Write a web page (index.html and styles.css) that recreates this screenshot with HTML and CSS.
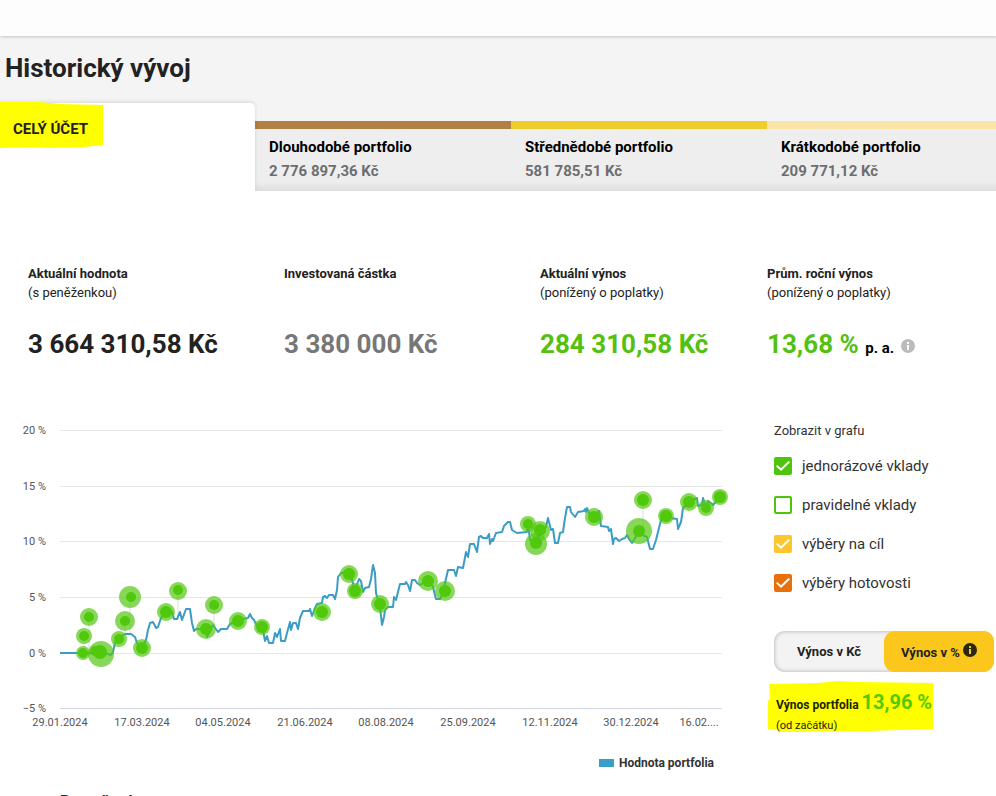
FILE: index.html
```html
<!DOCTYPE html>
<html lang="cs">
<head>
<meta charset="utf-8">
<meta name="viewport" content="width=device-width, initial-scale=1">
<title>Historický vývoj</title>
<link rel="stylesheet" href="styles.css">
</head>
<body>
<div class="topbar"></div>
<header class="head">
  <h1>Historický vývoj</h1>
  <nav class="tabs">
    <button class="tab tab-active" type="button">
      <svg class="mark mark-tab" viewBox="0 0 104 48" preserveAspectRatio="none" aria-hidden="true"><path d="M0 1L40 1 60 3 103 4V44L84 46 50 47 28 46 0 47Z"/></svg>
      <span>CELÝ ÚČET</span>
    </button>
    <button class="tab tab-long" type="button"><span class="tab-name">Dlouhodobé portfolio</span><span class="tab-sum">2 776 897,36 Kč</span></button>
    <button class="tab tab-mid" type="button"><span class="tab-name">Střednědobé portfolio</span><span class="tab-sum">581 785,51 Kč</span></button>
    <button class="tab tab-short" type="button"><span class="tab-name">Krátkodobé portfolio</span><span class="tab-sum">209 771,12 Kč</span></button>
  </nav>
</header>
<main>
  <section class="stats">
    <div class="stat"><h2>Aktuální hodnota</h2><p>(s peněženkou)</p><strong>3 664 310,58 Kč</strong></div>
    <div class="stat"><h2>Investovaná částka</h2><p></p><strong class="muted">3 380 000 Kč</strong></div>
    <div class="stat"><h2>Aktuální výnos</h2><p>(ponížený o poplatky)</p><strong class="green">284 310,58 Kč</strong></div>
    <div class="stat"><h2>Prům. roční výnos</h2><p>(ponížený o poplatky)</p><strong class="green">13,68 % <small>p. a.</small> <svg class="info" viewBox="0 0 14 14" aria-hidden="true"><circle cx="7" cy="7" r="7"/><path d="M6 3h2v2H6zM6 6h2v5H6z"/></svg></strong></div>
  </section>
  <section class="detail">
    <div class="chart">
      <svg class="plot" viewBox="0 415 740 320" role="img" aria-label="Hodnota portfolia">
        <path class="grid" d="M60 430.500H722M60 486.500H722M60 541.500H722M60 597.500H722M60 653.500H722"/>
        <path class="axis" d="M60 708.500H722"/>
        <g class="ylab">
          <text x="46" y="434">20 %</text><text x="46" y="490">15 %</text><text x="46" y="545">10 %</text><text x="46" y="601">5 %</text><text x="46" y="657">0 %</text><text x="46" y="712">−5 %</text>
        </g>
        <g class="xlab">
          <text x="60" y="726">29.01.2024</text><text x="142" y="726">17.03.2024</text><text x="223" y="726">04.05.2024</text><text x="305" y="726">21.06.2024</text><text x="386" y="726">08.08.2024</text><text x="468" y="726">25.09.2024</text><text x="550" y="726">12.11.2024</text><text x="631" y="726">30.12.2024</text><text x="699" y="726">16.02....</text>
        </g>
        <path class="stem" d="M84 636V653M89 618V653M130 597V634M125 621V634M178 591V619M214 605V625M643 500V531"/>
        <polyline class="line" points="60,653 100,653 108,654 111,655 113,652 115,643 120,637 125,634 131,634 135,637 137,643 142,648 146,640 148,630 150,623 153,622 156,628 158,627 161,618 166,612 172,612 174,619 177,619 180,612 182,620 186,609 190,609 192,623 194,631 196,629 205,629 207,637 213,625 218,632 221,629 227,629 230,624 238,620 248,618 250,614 252,618 254,620 257,626 263,630 265,641 267,636 269,643 273,643 275,633 277,637 280,629 281,641 285,641 287,633 290,622 291,630 293,623 296,623 298,629 300,618 303,611 309,611 310,609 312,616 315,608 317,604 322,603 323,597 325,596 327,598 329,595 333,595 335,599 337,590 338,577 341,573 348,572 352,580 355,590 359,579 361,581 363,592 365,588 369,587 371,579 373,565 375,573 376,593 380,607 382,625 384,617 385,610 388,607 393,607 394,597 396,600 400,584 405,584 406,582 408,585 410,591 412,580 415,580 417,583 420,585 428,580 433,587 436,599 440,599 443,593 445,583 448,570 454,570 456,576 458,567 463,568 466,552 468,557 470,544 474,544 477,552 479,537 481,536 483,538 487,538 489,534 490,544 492,539 493,541 496,533 502,532 504,526 508,522 510,522 512,530 517,533 527,532 528,524 530,540 537,542 540,530 546,527 548,518 551,530 553,529 555,543 558,543 560,533 563,532 565,518 567,507 570,507 571,512 575,517 578,512 584,511 585,509 586,512 587,508 590,515 594,517 599,511 601,526 608,527 609,531 611,529 613,544 614,539 616,538 619,541 622,539 625,538 627,535 629,539 632,543 638,533 647,537 650,549 653,549 656,540 658,532 661,520 666,515 670,518 677,519 678,529 681,522 683,508 688,502 697,498 698,506 702,505 703,498 706,508 708,501 713,505 720,497"/>
        <g class="halo">
          <circle cx="84" cy="636" r="8"/><circle cx="89" cy="617" r="9"/><circle cx="83" cy="653" r="7"/><circle cx="101" cy="654" r="13"/><circle cx="130" cy="597" r="11"/><circle cx="125" cy="621" r="10"/><circle cx="119" cy="639" r="8"/><circle cx="142" cy="648" r="9"/><circle cx="166" cy="612" r="9"/><circle cx="178" cy="591" r="9"/><circle cx="206" cy="629" r="10"/><circle cx="214" cy="605" r="9"/><circle cx="238" cy="621" r="9"/><circle cx="262" cy="627" r="8"/><circle cx="322" cy="612" r="9"/><circle cx="349" cy="574" r="9"/><circle cx="355" cy="591" r="8"/><circle cx="380" cy="604" r="9"/><circle cx="428" cy="581" r="10"/><circle cx="445" cy="591" r="10"/><circle cx="528" cy="524" r="8"/><circle cx="540" cy="531" r="10"/><circle cx="536" cy="544" r="11"/><circle cx="594" cy="517" r="9"/><circle cx="643" cy="500" r="9"/><circle cx="639" cy="531" r="13"/><circle cx="666" cy="516" r="8"/><circle cx="689" cy="502" r="9"/><circle cx="706" cy="508" r="8"/><circle cx="720" cy="497" r="8"/>
        </g>
        <g class="core">
          <circle cx="84" cy="636" r="5"/><circle cx="89" cy="617" r="5"/><circle cx="83" cy="653" r="5"/><circle cx="100" cy="652" r="7"/><circle cx="95" cy="651" r="5"/><circle cx="131" cy="597" r="5"/><circle cx="125" cy="621" r="5"/><circle cx="119" cy="639" r="5"/><circle cx="142" cy="648" r="6"/><circle cx="166" cy="612" r="6"/><circle cx="178" cy="590" r="5"/><circle cx="206" cy="629" r="6"/><circle cx="214" cy="605" r="5"/><circle cx="238" cy="621" r="6"/><circle cx="262" cy="627" r="6"/><circle cx="322" cy="612" r="6"/><circle cx="349" cy="574" r="6"/><circle cx="355" cy="591" r="6"/><circle cx="380" cy="604" r="6"/><circle cx="428" cy="581" r="6"/><circle cx="445" cy="591" r="6"/><circle cx="528" cy="524" r="5"/><circle cx="540" cy="530" r="6"/><circle cx="536" cy="543" r="6"/><circle cx="594" cy="517" r="6"/><circle cx="643" cy="500" r="6"/><circle cx="639" cy="531" r="6"/><circle cx="666" cy="516" r="6"/><circle cx="689" cy="502" r="6"/><circle cx="706" cy="508" r="5"/><circle cx="720" cy="497" r="6"/>
        </g>
      </svg>
      <div class="legend"><i></i>Hodnota portfolia</div>
    </div>
    <aside class="side">
      <fieldset>
        <legend>Zobrazit v grafu</legend>
        <label class="check"><input class="c-green" type="checkbox" checked>jednorázové vklady</label>
        <label class="check"><input class="c-green" type="checkbox">pravidelné vklady</label>
        <label class="check"><input class="c-yellow" type="checkbox" checked>výběry na cíl</label>
        <label class="check"><input class="c-orange" type="checkbox" checked>výběry hotovosti</label>
      </fieldset>
      <div class="switch">
        <button type="button">Výnos v Kč</button>
        <button class="on" type="button">Výnos v % <svg class="info info-dark" viewBox="0 0 14 14" aria-hidden="true"><circle cx="7" cy="7" r="7"/><path d="M6 3h2v2H6zM6 6h2v5H6z"/></svg></button>
      </div>
      <div class="result">
        <svg class="mark mark-result" viewBox="0 0 166 52" preserveAspectRatio="none" aria-hidden="true"><path d="M1 3L50 2 70 0 90 1 165 2V48L100 50 10 51V48H0V20L2 18Z"/></svg>
        <p class="result-main"><b>Výnos portfolia</b> <strong>13,96 %</strong></p>
        <p class="result-note">(od začátku)</p>
      </div>
    </aside>
  </section>
  <h2 class="next">Rozvržení</h2>
</main>
</body>
</html>
```
FILE: styles.css
```css
* { box-sizing: border-box; }
body {
  margin: 0;
  height: 100vh;
  overflow: hidden;
  background: #fff;
  color: #222;
  font-family: Roboto, "Liberation Sans", sans-serif;
  font-size: 13px;
}
h1, h2, p { margin: 0; }
button { font: inherit; color: inherit; border: 0; margin: 0; cursor: pointer; }

.topbar {
  position: relative;
  height: 36px;
  background: #fdfdfd;
  box-shadow: 0 1px 3px rgba(0, 0, 0, .2);
}
.head { background: #f4f4f4; }
h1 { padding: 16px 5px 19px; font-size: 26px; line-height: 32px; font-weight: 700; }

.tabs {
  display: grid;
  grid-template-columns: 255fr 256fr 256fr 229fr;
  align-items: end;
}
.tab {
  position: relative;
  display: flex;
  flex-direction: column;
  align-items: flex-start;
  height: 70px;
  padding: 6px 14px 0;
  border-top: 8px solid;
  background: linear-gradient(#eee 85%, #dedede);
  text-align: left;
  white-space: nowrap;
}
.tab-active {
  z-index: 1;
  height: 88px;
  padding: 17px 13px 0;
  border-top: 0;
  border-radius: 0 5px 0 0;
  background: #fff;
  box-shadow: 0 -1px 4px rgba(0, 0, 0, .12);
  clip-path: inset(-6px -4px 0 0);
  font-size: 15px;
  font-weight: 700;
  line-height: 18px;
}
.tab-active span { position: relative; }
.tab-long { border-color: #b08044; }
.tab-mid { border-color: #edcc2c; }
.tab-short { border-color: #fbe4a8; }
.tab-name { color: #000; font-size: 15px; font-weight: 700; line-height: 24px; }
.tab-sum { color: #6e6e6e; font-size: 15px; font-weight: 700; line-height: 24px; }
.mark { position: absolute; fill: #ff0; }
.mark-tab { left: 0; top: -2px; width: 104px; height: 48px; }

.stats {
  display: grid;
  grid-template-columns: 256fr 256fr 227fr 229fr;
  padding: 73px 0 0 28px;
}
.stat { white-space: nowrap; }
.stat h2 { font-size: 13px; line-height: 19px; font-weight: 700; }
.stat p { height: 19px; line-height: 19px; }
.stat strong { display: block; margin-top: 26px; font-size: 26px; line-height: 32px; }
.stat .muted { color: #777; }
.stat .green { color: #54c010; }
.stat small { color: #000; font-size: 15px; }
.info { width: 14px; height: 14px; fill: #bbb; }
.info path { fill: #fff; }

.detail {
  display: grid;
  grid-template-columns: minmax(0, 1fr) 222px;
  gap: 34px;
  padding-top: 51px;
}
.plot { display: block; width: 100%; height: auto; }
.plot text { font-size: 11px; fill: #555; }
.ylab { text-anchor: end; }
.xlab { text-anchor: middle; }
.grid { stroke: #e6e6e6; }
.axis { stroke: #d4d6e2; }
.stem { stroke: #ddd; }
.line { fill: none; stroke: #3b9cc6; stroke-width: 2; stroke-linejoin: round; }
.halo { fill: #54c812; fill-opacity: .7; }
.core { fill: #50c80c; }
.legend {
  display: flex;
  align-items: center;
  justify-content: flex-end;
  gap: 5px;
  padding: 19px 26px 0 0;
  color: #333;
  font-size: 12px;
  font-weight: 700;
  line-height: 18px;
}
.legend i { width: 15px; height: 8px; background: #36a0c8; }

fieldset { margin: 0; padding: 0; border: 0; }
legend { padding: 6px 0 15px; line-height: 20px; color: #333; }
.check {
  display: flex;
  align-items: center;
  gap: 10px;
  height: 20px;
  margin-bottom: 19px;
  color: #333;
  font-size: 15px;
}
.check input {
  appearance: none;
  display: grid;
  place-items: center;
  width: 18px;
  height: 18px;
  margin: 0;
  border: 2px solid var(--tone);
  border-radius: 2px;
}
.check input:checked { background: var(--tone); }
.check input:checked::before {
  content: "";
  width: 14px;
  height: 11px;
  background: #fff;
  clip-path: polygon(0 52%, 10% 40%, 36% 70%, 89% 4%, 100% 16%, 36% 96%);
}
.c-green { --tone: #4fc40c; }
.c-yellow { --tone: #fcc62e; }
.c-orange { --tone: #e8700c; }

.switch {
  display: flex;
  width: 220px;
  height: 41px;
  margin-top: 19px;
  border-radius: 11px;
  background: #f3f3f3;
  box-shadow: inset 0 0 4px rgba(0, 0, 0, .3);
}
.switch button { flex: 1; padding: 0; border-radius: 11px; background: none; font-weight: 700; white-space: nowrap; }
.switch .on { background: #fbc71c; }
.info-dark { fill: #2b2810; }
.info-dark path { fill: #fbc71c; }

.result { position: relative; padding: 17px 2px 0; font-size: 12px; white-space: nowrap; }
.result p { position: relative; }
.mark-result { left: -6px; top: 9px; width: 166px; height: 52px; }
.result-main { line-height: 26px; color: #221f00; }
.result-main strong { color: #54c800; font-size: 20px; }
.result-note { line-height: 16px; font-size: 11px; }
.next { padding: 20px 0 0 60px; font-size: 16px; line-height: 20px; }
```
